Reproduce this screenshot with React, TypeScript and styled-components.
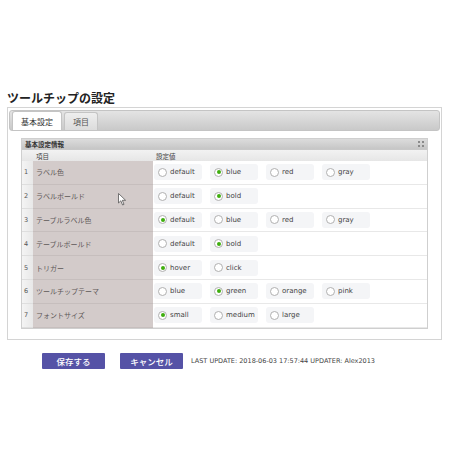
import React from 'react'
import styled, { createGlobalStyle } from 'styled-components'

const GlobalStyle = createGlobalStyle`
  html, body {
    margin: 0;
    padding: 0;
    background: #ffffff;
  }
  body {
    font-family: 'DejaVu Sans', 'Noto Sans CJK JP', sans-serif;
    color: #333;
  }
`

const JP = `'Noto Sans CJK JP', 'Noto Sans', sans-serif`
const LATIN = `'DejaVu Sans', 'Noto Sans CJK JP', sans-serif`

const Page = styled.div({
  position: 'relative',
  width: '460px',
  height: '460px',
  paddingTop: '89px',
  boxSizing: 'border-box',
})

const Title = styled.h1({
  margin: '0 0 1px 7px',
  fontFamily: JP,
  fontSize: '12px',
  lineHeight: '17px',
  fontWeight: 700,
  color: '#222',
})

const OuterPanel = styled.div({
  marginLeft: '7px',
  width: '435px',
  boxSizing: 'border-box',
  border: '1px solid #d4d4d4',
  padding: '2px 1px 10px 1px',
})

const TabBar = styled.div({
  display: 'flex',
  alignItems: 'flex-end',
  height: '21px',
  padding: '0 2px',
  boxSizing: 'border-box',
  border: '1px solid #c4c4c4',
  borderRadius: '3px',
  background: 'linear-gradient(#e4e4e4, #c9c9c9)',
})

const Tab = styled.div<{ active?: boolean }>(props => ({
  height: props.active ? '19px' : '18px',
  marginRight: '2px',
  padding: '0 8px',
  boxSizing: 'border-box',
  display: 'flex',
  alignItems: 'center',
  fontFamily: JP,
  fontSize: '8px',
  color: props.active ? '#333' : '#555',
  background: props.active ? '#ffffff' : 'linear-gradient(#eeeeee, #dcdcdc)',
  border: '1px solid #c4c4c4',
  borderBottom: 'none',
  borderRadius: '3px 3px 0 0',
}))

const TabBody = styled.div({
  padding: '7px 12px 0 12px',
})

const InnerPanel = styled.div({
  border: '1px solid #cfcfcf',
  background: '#ffffff',
})

const InnerHeader = styled.div({
  height: '10px',
  display: 'flex',
  alignItems: 'center',
  justifyContent: 'space-between',
  padding: '0 3px',
  fontFamily: JP,
  fontSize: '6.5px',
  fontWeight: 700,
  color: '#333',
  background: 'linear-gradient(#dcdcdc, #c6c6c6)',
  borderBottom: '1px solid #c8c8c8',
})

const Grid = styled.div({
  display: 'grid',
  gridTemplateColumns: '11px 120px 1fr',
})

const HeadCell = styled.div({
  height: '11px',
  display: 'flex',
  alignItems: 'center',
  paddingLeft: '3px',
  fontFamily: JP,
  fontSize: '6.5px',
  color: '#444',
  background: 'linear-gradient(#f2f2f2, #e6e6e6)',
})

const ROW_H = '23.8px'

const NumCell = styled.div({
  height: ROW_H,
  display: 'flex',
  alignItems: 'center',
  paddingLeft: '2px',
  fontFamily: LATIN,
  fontSize: '6.5px',
  color: '#555',
  background: 'linear-gradient(90deg, #f4f4f4, #e8e8e8)',
  borderBottom: '1px solid #dedede',
  boxSizing: 'border-box',
})

const NameCell = styled.div({
  height: ROW_H,
  display: 'flex',
  alignItems: 'center',
  paddingLeft: '3px',
  fontFamily: JP,
  fontSize: '7px',
  color: '#5e5858',
  background: '#d3cbca',
  borderBottom: '1px solid #c6bebd',
  boxSizing: 'border-box',
})

const ValueCell = styled.div({
  height: ROW_H,
  display: 'flex',
  alignItems: 'center',
  gap: '8px',
  paddingLeft: '1px',
  borderBottom: '1px solid #e8e8e8',
  boxSizing: 'border-box',
})

const Option = styled.div({
  width: '48px',
  height: '16px',
  display: 'flex',
  alignItems: 'center',
  gap: '3px',
  paddingLeft: '4px',
  boxSizing: 'border-box',
  background: '#f4f5f7',
  borderRadius: '3px',
  fontFamily: LATIN,
  fontSize: '7px',
  color: '#444',
})

const Radio = styled.span<{ checked?: boolean }>(props => ({
  width: '7px',
  height: '7px',
  borderRadius: '50%',
  border: '1px solid #b0b0b0',
  background: '#fff',
  boxSizing: 'content-box',
  display: 'flex',
  alignItems: 'center',
  justifyContent: 'center',
  '&::after': props.checked
    ? { content: '""', width: '4px', height: '4px', borderRadius: '50%', background: '#3fae0f' }
    : {},
}))

const Footer = styled.div({
  display: 'flex',
  alignItems: 'center',
  marginTop: '13px',
  paddingLeft: '42px',
})

const Button = styled.button({
  width: '63px',
  height: '16px',
  marginRight: '15px',
  padding: 0,
  border: 'none',
  borderRadius: '1px',
  background: '#5552a6',
  color: '#ffffff',
  fontFamily: JP,
  fontSize: '8.5px',
  fontWeight: 500,
})

const UpdateText = styled.span({
  marginLeft: '-7px',
  fontFamily: LATIN,
  fontSize: '6.5px',
  color: '#444',
})

const Cursor = styled.svg({
  position: 'absolute',
  left: '118px',
  top: '193px',
})

interface Setting {
  name: string
  options: string[]
  selected: string
}

const settings: Setting[] = [
  { name: 'ラベル色', options: ['default', 'blue', 'red', 'gray'], selected: 'blue' },
  { name: 'ラベルボールド', options: ['default', 'bold'], selected: 'bold' },
  { name: 'テーブルラベル色', options: ['default', 'blue', 'red', 'gray'], selected: 'default' },
  { name: 'テーブルボールド', options: ['default', 'bold'], selected: 'bold' },
  { name: 'トリガー', options: ['hover', 'click'], selected: 'hover' },
  { name: 'ツールチップテーマ', options: ['blue', 'green', 'orange', 'pink'], selected: 'green' },
  { name: 'フォントサイズ', options: ['small', 'medium', 'large'], selected: 'small' },
]

function ExpandIcon() {
  return (
    <svg width="6" height="6" viewBox="0 0 6 6">
      <rect x="0" y="0" width="2" height="2" fill="#8a8a8a" />
      <rect x="4" y="0" width="2" height="2" fill="#8a8a8a" />
      <rect x="0" y="4" width="2" height="2" fill="#8a8a8a" />
      <rect x="4" y="4" width="2" height="2" fill="#8a8a8a" />
    </svg>
  )
}

export default function App() {
  return (
    <Page>
      <GlobalStyle />
      <Title>ツールチップの設定</Title>
      <OuterPanel>
        <TabBar>
          <Tab active>基本設定</Tab>
          <Tab>項目</Tab>
        </TabBar>
        <TabBody>
          <InnerPanel>
            <InnerHeader>
              基本設定情報
              <ExpandIcon />
            </InnerHeader>
            <Grid>
              <HeadCell />
              <HeadCell>項目</HeadCell>
              <HeadCell>設定値</HeadCell>
              {settings.map((s, i) => (
                <React.Fragment key={s.name}>
                  <NumCell>{i + 1}</NumCell>
                  <NameCell>{s.name}</NameCell>
                  <ValueCell>
                    {s.options.map(o => (
                      <Option key={o}>
                        <Radio checked={o === s.selected} />
                        {o}
                      </Option>
                    ))}
                  </ValueCell>
                </React.Fragment>
              ))}
            </Grid>
          </InnerPanel>
        </TabBody>
      </OuterPanel>
      <Footer>
        <Button>保存する</Button>
        <Button>キャンセル</Button>
        <UpdateText>LAST UPDATE: 2018-06-03 17:57:44 UPDATER: Alex2013</UpdateText>
      </Footer>
      <Cursor width="9" height="13" viewBox="0 0 9 13">
        <path d="M0.5 0.5 L0.5 10 L2.8 7.8 L4.6 12 L6 11.4 L4.3 7.3 L7.6 7.3 Z" fill="#fff" stroke="#555" strokeWidth="0.8" />
      </Cursor>
    </Page>
  )
}
